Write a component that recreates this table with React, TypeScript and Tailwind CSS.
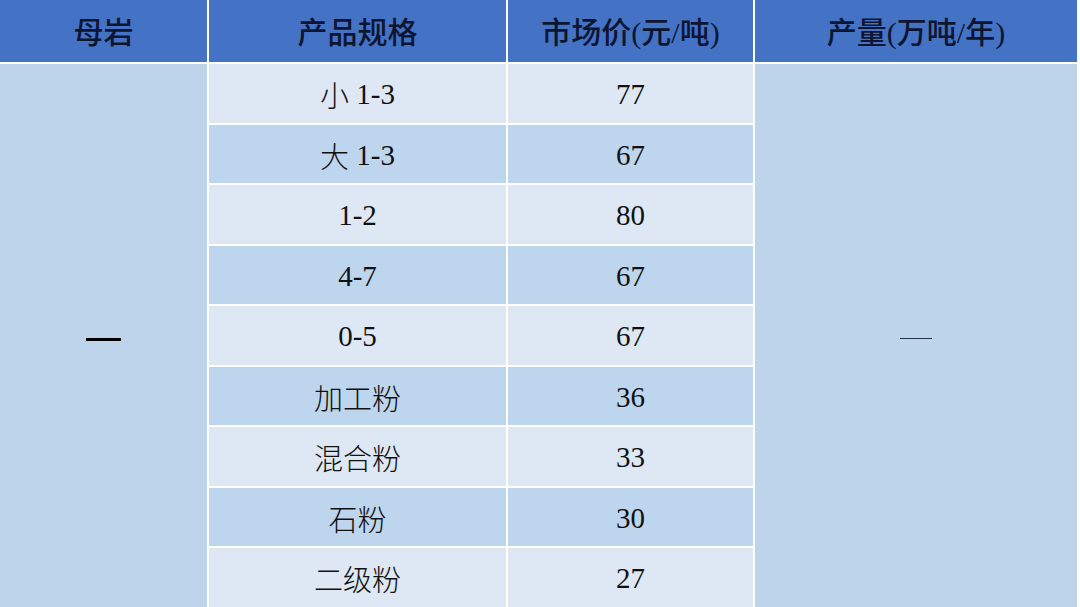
import React from "react";

const rows: [string, string][] = [
  ["小 1-3", "77"],
  ["大 1-3", "67"],
  ["1-2", "80"],
  ["4-7", "67"],
  ["0-5", "67"],
  ["加工粉", "36"],
  ["混合粉", "33"],
  ["石粉", "30"],
  ["二级粉", "27"],
];

const serif = {
  fontFamily: '"Liberation Serif", "Noto Sans CJK SC", serif',
};

function Spec({ text }: { text: string }) {
  const parts = text.split(/([\u4e00-\u9fff]+)/).filter((p) => p.length > 0);
  return (
    <>
      {parts.map((p, i) =>
        /[\u4e00-\u9fff]/.test(p) ? (
          <span
            key={i}
            className="font-light"
            style={{ fontFamily: '"Noto Sans CJK SC", sans-serif' }}
          >
            {p}
          </span>
        ) : (
          <span key={i} className="whitespace-pre">
            {p}
          </span>
        )
      )}
    </>
  );
}

export default function App() {
  return (
    <div className="w-[1080px] h-[607px] bg-white overflow-hidden">
      <div className="w-[1077px] h-[607px] grid grid-cols-[207px_297px_245px_1fr] grid-rows-[62px_repeat(9,1fr)] gap-[2px] bg-white">
        {["母岩", "产品规格", "市场价(元/吨)", "产量(万吨/年)"].map((h) => (
          <div
            key={h}
            className="bg-[#4472c4] flex items-center justify-center pt-[3px] text-[30px] text-[#0d1530] font-medium"
            style={{ fontFamily: '"Liberation Serif", "Noto Sans CJK SC", sans-serif' }}
          >
            {h}
          </div>
        ))}
        <div className="row-start-2 row-span-9 col-start-1 bg-[#bed4ea] flex items-center justify-center pt-[8px]">
          <div className="w-[35px] h-[3px] bg-black" />
        </div>
        {rows.map(([spec, price], i) => {
          const bg = i % 2 === 0 ? "bg-[#dee8f4]" : "bg-[#bed6ed]";
          return (
            <React.Fragment key={spec}>
              <div
                className={`${bg} col-start-2 flex items-center justify-center pt-[3px] text-[29px] text-[#111]`}
                style={{ ...serif, gridRowStart: i + 2 }}
              >
                <Spec text={spec} />
              </div>
              <div
                className={`${bg} col-start-3 flex items-center justify-center pt-[3px] text-[29px] text-[#111]`}
                style={{ ...serif, gridRowStart: i + 2 }}
              >
                {price}
              </div>
            </React.Fragment>
          );
        })}
        <div className="row-start-2 row-span-9 col-start-4 bg-[#bed4ea] flex items-center justify-center pt-[6px]">
          <div className="w-[32px] h-[1.5px] bg-[#1f2f4a]" />
        </div>
      </div>
    </div>
  );
}
